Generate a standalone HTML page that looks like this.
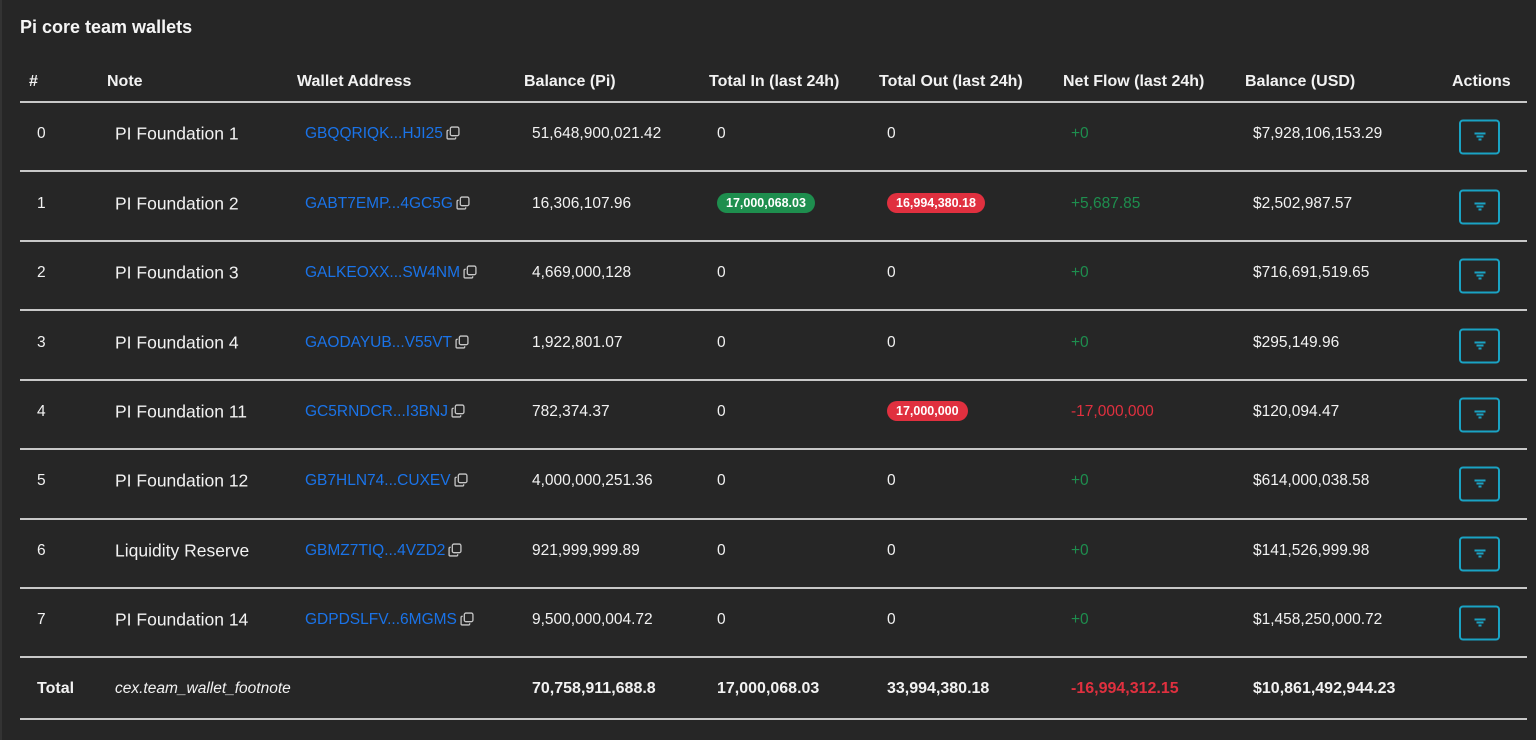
<!DOCTYPE html>
<html><head><meta charset="utf-8"><style>
html,body{margin:0;padding:0;}
body{width:1536px;height:740px;background:#262626;position:relative;overflow:hidden;font-family:"Liberation Sans",sans-serif;color:#f2f2f2;}
.edge{position:absolute;left:0;top:0;width:2px;height:740px;background:#333;}
.t{position:absolute;white-space:nowrap;transform:translateY(-50%);}
h1{position:absolute;left:20px;top:17px;margin:0;font-size:18px;font-weight:bold;color:#f5f5f5;}
.h{font-weight:bold;font-size:16px;}
.line{position:absolute;left:20px;width:1507px;height:2px;background:#c8c8c8;}
.n{font-size:15.5px;}
.note{font-size:17.5px;}
.addr{font-size:15.5px;color:#1a73e8;}
.addr svg{vertical-align:-2px;margin-left:3px;}
.g{color:#1e8e4e;font-size:15.5px;}
.r{color:#e0303f;font-size:15.5px;}
.pill{font-size:12.5px;font-weight:bold;color:#fff;border-radius:10px;padding:3px 9px;}
.btn{position:absolute;left:1459px;width:37px;height:31px;border:2px solid #1aa3c4;border-radius:4px;transform:translateY(-50%);}
.btn i{position:absolute;left:50%;height:2px;background:#1aa3c4;transform:translateX(-50%);}
</style></head><body>
<div class="edge"></div>
<h1>Pi core team wallets</h1>
<div class="t h" style="left:29px;top:82px">#</div>
<div class="t h" style="left:107px;top:82px">Note</div>
<div class="t h" style="left:297px;top:82px">Wallet Address</div>
<div class="t h" style="left:524px;top:82px">Balance (Pi)</div>
<div class="t h" style="left:709px;top:82px">Total In (last 24h)</div>
<div class="t h" style="left:879px;top:82px">Total Out (last 24h)</div>
<div class="t h" style="left:1063px;top:82px">Net Flow (last 24h)</div>
<div class="t h" style="left:1245px;top:82px">Balance (USD)</div>
<div class="t h" style="left:1452px;top:82px">Actions</div>
<div class="line" style="top:101px"></div>
<div class="line" style="top:170px"></div>
<div class="line" style="top:240px"></div>
<div class="line" style="top:309px"></div>
<div class="line" style="top:379px"></div>
<div class="line" style="top:448px"></div>
<div class="line" style="top:518px"></div>
<div class="line" style="top:587px"></div>
<div class="line" style="top:656px"></div>
<div class="line" style="top:718px"></div>

<div id="rows"></div>
<script>
var rows=[
["0","PI Foundation 1","GBQQRIQK...HJI25","51,648,900,021.42","0","0","+0","$7,928,106,153.29",134],
["1","PI Foundation 2","GABT7EMP...4GC5G","16,306,107.96","P17,000,068.03","P16,994,380.18","+5,687.85","$2,502,987.57",204],
["2","PI Foundation 3","GALKEOXX...SW4NM","4,669,000,128","0","0","+0","$716,691,519.65",273],
["3","PI Foundation 4","GAODAYUB...V55VT","1,922,801.07","0","0","+0","$295,149.96",343],
["4","PI Foundation 11","GC5RNDCR...I3BNJ","782,374.37","0","P17,000,000","-17,000,000","$120,094.47",412],
["5","PI Foundation 12","GB7HLN74...CUXEV","4,000,000,251.36","0","0","+0","$614,000,038.58",481],
["6","Liquidity Reserve","GBMZ7TIQ...4VZD2","921,999,999.89","0","0","+0","$141,526,999.98",551],
["7","PI Foundation 14","GDPDSLFV...6MGMS","9,500,000,004.72","0","0","+0","$1,458,250,000.72",620]];
var cp='<svg width="14" height="14" viewBox="0 0 13 13" fill="none" stroke="#c8c8c8" stroke-width="1.2"><rect x="4" y="1" width="8" height="8" rx="1.5"/><path d="M2.5 4H2a1 1 0 0 0-1 1v6a1 1 0 0 0 1 1h6a1 1 0 0 0 1-1v-.5"/></svg>';
var h='';
rows.forEach(function(r){var y=r[8];
function cell(x,v,bg){if(v[0]=='P')return '<div class="t" style="left:'+x+'px;top:'+(y-1)+'px"><span class="pill" style="background:'+bg+'">'+v.slice(1)+'</span></div>';return '<div class="t n" style="left:'+x+'px;top:'+y+'px">'+v+'</div>';}
h+='<div class="t n" style="left:37px;top:'+y+'px">'+r[0]+'</div>';
h+='<div class="t note" style="left:115px;top:'+y+'px">'+r[1]+'</div>';
h+='<div class="t addr" style="left:305px;top:'+y+'px">'+r[2]+cp+'</div>';
h+=cell(532,r[3]);h+=cell(717,r[4],'#1e8e4e');h+=cell(887,r[5],'#e0303f');
h+='<div class="t '+(r[6][0]=='-'?'r':'g')+'" style="left:1071px;top:'+y+'px">'+r[6]+'</div>';
h+=cell(1253,r[7]);
h+='<div class="btn" style="top:'+(y+3)+'px"><i style="top:11px;width:11px"></i><i style="top:14px;width:7px"></i><i style="top:17px;width:3px"></i></div>';
});
document.getElementById('rows').innerHTML=h;
</script>
<div class="t h" style="left:37px;top:689px">Total</div>
<div class="t" style="left:115px;top:689px;font-style:italic;font-size:15.5px">cex.team_wallet_footnote</div>
<div class="t h" style="left:532px;top:689px">70,758,911,688.8</div>
<div class="t h" style="left:717px;top:689px">17,000,068.03</div>
<div class="t h" style="left:887px;top:689px">33,994,380.18</div>
<div class="t h" style="left:1071px;top:689px;color:#e0303f">-16,994,312.15</div>
<div class="t h" style="left:1253px;top:689px">$10,861,492,944.23</div>
</body></html>
